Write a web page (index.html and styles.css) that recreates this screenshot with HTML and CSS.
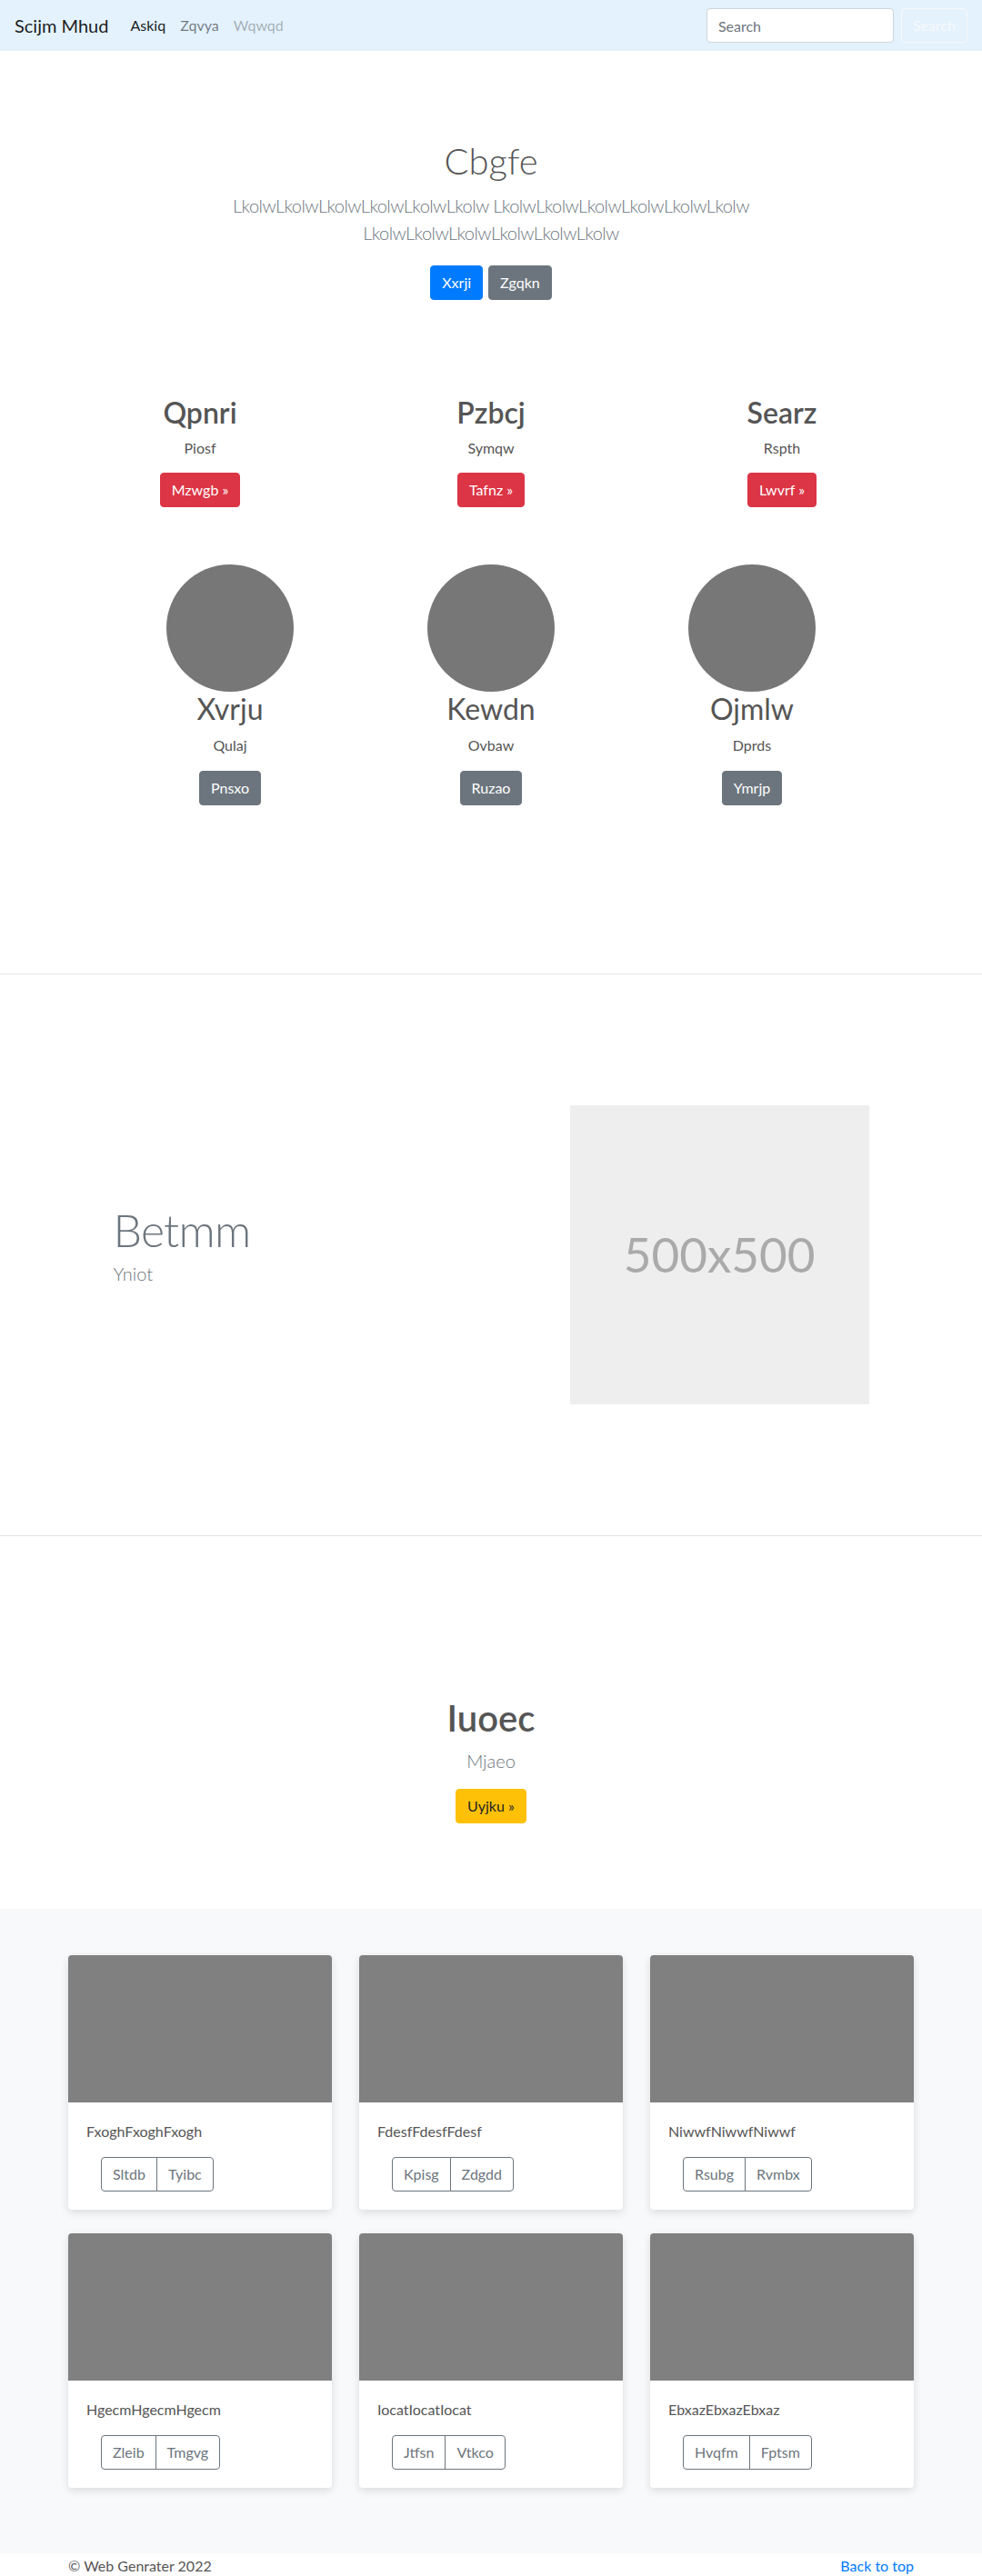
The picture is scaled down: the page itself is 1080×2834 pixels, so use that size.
FILE: index.html
```html
<!DOCTYPE html>
<html lang="en">
<head>
<meta charset="utf-8">
<title>Scijm Mhud</title>
<link rel="stylesheet" href="styles.css">
</head>
<body>
<nav class="navbar">
  <a class="brand" href="#">Scijm Mhud</a>
  <ul class="nav">
    <li><a class="nav-link active" href="#">Askiq</a></li>
    <li><a class="nav-link" href="#">Zqvya</a></li>
    <li><a class="nav-link disabled" href="#">Wqwqd</a></li>
  </ul>
  <form class="search">
    <input class="search-input" type="text" placeholder="Search">
    <button class="btn btn-outline-light" type="button">Search</button>
  </form>
</nav>

<section class="hero">
  <div class="hero-inner">
    <h1 class="hero-title">Cbgfe</h1>
    <p class="lead hero-lead">LkolwLkolwLkolwLkolwLkolwLkolw LkolwLkolwLkolwLkolwLkolwLkolw LkolwLkolwLkolwLkolwLkolwLkolw</p>
    <div class="hero-btns">
      <a class="btn btn-primary" href="#">Xxrji</a>
      <a class="btn btn-secondary" href="#">Zgqkn</a>
    </div>
  </div>
</section>

<section class="features">
  <div class="feature">
    <h2 class="feature-title">Qpnri</h2>
    <p class="feature-text">Piosf</p>
    <a class="btn btn-danger" href="#">Mzwgb »</a>
  </div>
  <div class="feature">
    <h2 class="feature-title">Pzbcj</h2>
    <p class="feature-text">Symqw</p>
    <a class="btn btn-danger" href="#">Tafnz »</a>
  </div>
  <div class="feature">
    <h2 class="feature-title">Searz</h2>
    <p class="feature-text">Rspth</p>
    <a class="btn btn-danger" href="#">Lwvrf »</a>
  </div>
</section>

<section class="marketing">
  <div class="person">
    <div class="circle"></div>
    <h2 class="person-name">Xvrju</h2>
    <p class="person-text">Qulaj</p>
    <a class="btn btn-secondary" href="#">Pnsxo</a>
  </div>
  <div class="person">
    <div class="circle"></div>
    <h2 class="person-name">Kewdn</h2>
    <p class="person-text">Ovbaw</p>
    <a class="btn btn-secondary" href="#">Ruzao</a>
  </div>
  <div class="person">
    <div class="circle"></div>
    <h2 class="person-name">Ojmlw</h2>
    <p class="person-text">Dprds</p>
    <a class="btn btn-secondary" href="#">Ymrjp</a>
  </div>
</section>

<hr class="divider divider-first">

<section class="featurette">
  <div class="featurette-text">
    <h2 class="featurette-heading">Betmm</h2>
    <p class="lead featurette-lead">Yniot</p>
  </div>
  <div class="featurette-media">
    <div class="placeholder">500x500</div>
  </div>
</section>

<hr class="divider divider-second">

<section class="cta">
  <h2 class="cta-title">Iuoec</h2>
  <p class="lead cta-lead">Mjaeo</p>
  <a class="btn btn-warning" href="#">Uyjku »</a>
</section>

<section class="album">
  <div class="cards">
    <div class="card">
      <div class="card-img"></div>
      <div class="card-body">
        <p class="card-text">FxoghFxoghFxogh</p>
        <div class="btn-group"><a class="btn btn-outline-secondary" href="#">Sltdb</a><a class="btn btn-outline-secondary" href="#">Tyibc</a></div>
      </div>
    </div>
    <div class="card">
      <div class="card-img"></div>
      <div class="card-body">
        <p class="card-text">FdesfFdesfFdesf</p>
        <div class="btn-group"><a class="btn btn-outline-secondary" href="#">Kpisg</a><a class="btn btn-outline-secondary" href="#">Zdgdd</a></div>
      </div>
    </div>
    <div class="card">
      <div class="card-img"></div>
      <div class="card-body">
        <p class="card-text">NiwwfNiwwfNiwwf</p>
        <div class="btn-group"><a class="btn btn-outline-secondary" href="#">Rsubg</a><a class="btn btn-outline-secondary" href="#">Rvmbx</a></div>
      </div>
    </div>
    <div class="card">
      <div class="card-img"></div>
      <div class="card-body">
        <p class="card-text">HgecmHgecmHgecm</p>
        <div class="btn-group"><a class="btn btn-outline-secondary" href="#">Zleib</a><a class="btn btn-outline-secondary" href="#">Tmgvg</a></div>
      </div>
    </div>
    <div class="card">
      <div class="card-img"></div>
      <div class="card-body">
        <p class="card-text">IocatIocatIocat</p>
        <div class="btn-group"><a class="btn btn-outline-secondary" href="#">Jtfsn</a><a class="btn btn-outline-secondary" href="#">Vtkco</a></div>
      </div>
    </div>
    <div class="card">
      <div class="card-img"></div>
      <div class="card-body">
        <p class="card-text">EbxazEbxazEbxaz</p>
        <div class="btn-group"><a class="btn btn-outline-secondary" href="#">Hvqfm</a><a class="btn btn-outline-secondary" href="#">Fptsm</a></div>
      </div>
    </div>
  </div>
</section>

<footer class="footer">
  <p class="footer-copy">© Web Genrater 2022</p>
  <a class="footer-top" href="#">Back to top</a>
</footer>
</body>
</html>
```

FILE: styles.css
```css
* { box-sizing: border-box; }

body {
  margin: 0;
  font-family: Lato, "Liberation Sans", sans-serif;
  font-size: 16px;
  line-height: 1.5;
  color: #555;
  background: #fff;
}

a { text-decoration: none; }

/* navbar */
.navbar {
  display: flex;
  align-items: center;
  height: 56px;
  padding: 8px 16px;
  background: #e3f2fd;
}
.brand {
  font-size: 20px;
  line-height: 30px;
  padding: 5px 0;
  margin-right: 16px;
  color: rgba(0,0,0,.9);
}
.nav {
  display: flex;
  list-style: none;
  margin: 0;
  padding: 0;
}
.nav-link {
  display: block;
  padding: 8px;
  color: rgba(0,0,0,.5);
}
.nav-link.active { color: rgba(0,0,0,.9); }
.nav-link.disabled { color: rgba(0,0,0,.3); }
.search {
  margin-left: auto;
  display: flex;
  align-items: center;
}
.search-input {
  width: 206px;
  height: 38px;
  padding: 6px 12px;
  font: inherit;
  font-size: 16px;
  color: #495057;
  background: #fff;
  border: 1px solid #ced4da;
  border-radius: 4px;
  margin-right: 8px;
}
.search-input::placeholder { color: #6c757d; }

/* buttons */
.btn {
  display: inline-block;
  padding: 6px 12px;
  font-family: inherit;
  font-size: 16px;
  line-height: 24px;
  border: 1px solid transparent;
  border-radius: 4px;
  background: transparent;
  text-align: center;
  white-space: nowrap;
}
.btn-primary { background: #007bff; border-color: #007bff; color: #fff; }
.btn-secondary { background: #6c757d; border-color: #6c757d; color: #fff; }
.btn-danger { background: #dc3545; border-color: #dc3545; color: #fff; }
.btn-warning { background: #ffc107; border-color: #ffc107; color: #212529; }
.btn-outline-light { border-color: #f8f9fa; color: #f8f9fa; }
.btn-outline-secondary { border-color: #6c757d; color: #6c757d; }

/* hero */
.hero {
  padding-top: 97px;
}
.hero-inner {
  max-width: 640px;
  margin: 0 auto;
  padding: 0 15px;
  display: flex;
  flex-direction: column;
  align-items: center;
  text-align: center;
}
.hero-title {
  margin: 0 0 10px;
  font-size: 40px;
  font-weight: 300;
  line-height: 1.2;
  color: #555;
}
.lead {
  margin: 0 0 16px;
  font-size: 20px;
  font-weight: 300;
  line-height: 30px;
  color: #6c757d;
}
.hero-lead {
  margin-bottom: 21px;
  letter-spacing: -0.55px;
}
.hero-btns {
  display: flex;
  justify-content: center;
  gap: 6px;
}

/* features */
.features {
  width: 960px;
  margin: 105px auto 0;
  display: grid;
  grid-template-columns: repeat(3, 1fr);
}
.feature {
  display: flex;
  flex-direction: column;
  align-items: center;
}
.feature-title {
  margin: 0 0 8px;
  font-size: 32px;
  font-weight: 600;
  line-height: 1.2;
  color: #555;
}
.feature-text {
  margin: 0 0 15px;
}

/* marketing */
.marketing {
  width: 861px;
  margin: 63px auto 0;
  display: grid;
  grid-template-columns: repeat(3, 1fr);
}
.person {
  display: flex;
  flex-direction: column;
  align-items: center;
}
.circle {
  width: 140px;
  height: 140px;
  border-radius: 50%;
  background: #777;
}
.person-name {
  margin: 0 0 8px;
  font-size: 32px;
  font-weight: 400;
  line-height: 1.2;
  color: #555;
}
.person-text {
  margin: 0 0 16px;
}

/* dividers */
.divider {
  margin: 0;
  border: 0;
  border-top: 1px solid #e6e6e6;
}
.divider-first { margin-top: 185px; }
.divider-second { margin-top: 144px; }

/* featurette */
.featurette {
  width: 861px;
  margin: 144px auto 0;
  display: grid;
  grid-template-columns: 7fr 5fr;
  align-items: center;
}
.featurette-text { padding: 0 15px; }
.featurette-media { padding: 0 15px; }
.featurette-heading {
  margin: 0 0 8px;
  font-size: 50px;
  font-weight: 300;
  line-height: 1;
  letter-spacing: -0.8px;
  color: #6c757d;
}
.placeholder {
  aspect-ratio: 1 / 1;
  background: #eee;
  color: #aaa;
  display: flex;
  align-items: center;
  justify-content: center;
  font-size: 53px;
}

/* cta */
.cta {
  display: flex;
  flex-direction: column;
  align-items: center;
  padding-top: 176px;
  padding-bottom: 94px;
}
.cta-title {
  margin: 0 0 8px;
  font-size: 40px;
  font-weight: 600;
  line-height: 1.2;
  color: #555;
}

/* album */
.album {
  background: #f8f9fa;
  padding: 51px 0 72px;
}
.cards {
  width: 930px;
  margin: 0 auto;
  display: grid;
  grid-template-columns: repeat(3, 290px);
  column-gap: 30px;
  row-gap: 26px;
}
.card {
  background: #fff;
  border-radius: 4px;
  overflow: hidden;
  box-shadow: 0 3px 10px rgba(0,0,0,.12);
}
.card-img {
  height: 162px;
  background: #808080;
}
.card-body {
  padding: 20px;
}
.card-text {
  margin: 0 0 16px;
}
.btn-group {
  display: inline-flex;
  margin-left: 16px;
}
.btn-group .btn:first-child {
  border-top-right-radius: 0;
  border-bottom-right-radius: 0;
}
.btn-group .btn:last-child {
  border-top-left-radius: 0;
  border-bottom-left-radius: 0;
  margin-left: -1px;
}

/* footer */
.footer {
  width: 930px;
  margin: 0 auto;
  padding: 2px 0 48px;
  display: flex;
  justify-content: space-between;
}
.footer-copy { margin: 0; }
.footer-top { color: #007bff; }
```
